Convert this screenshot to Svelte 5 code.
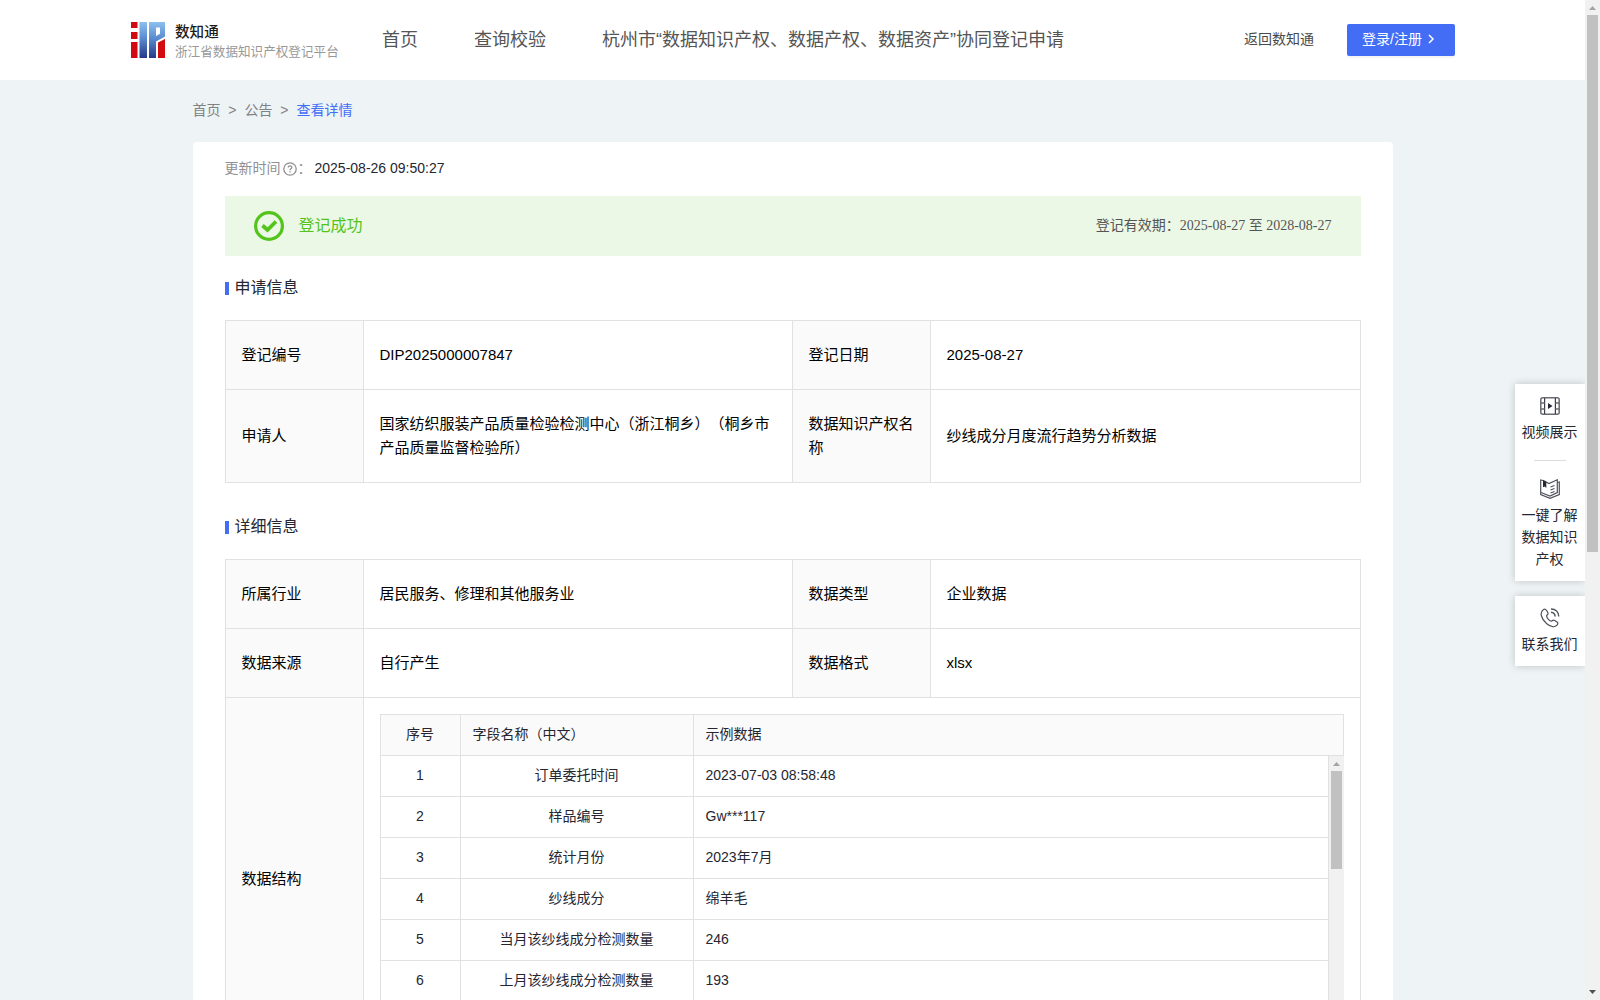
<script>
  const nav = ['首页', '查询校验', '杭州市“数据知识产权、数据产权、数据资产”协同登记申请'];

  const rows = [
    ['1', '订单委托时间', '2023-07-03 08:58:48'],
    ['2', '样品编号', 'Gw***117'],
    ['3', '统计月份', '2023年7月'],
    ['4', '纱线成分', '绵羊毛'],
    ['5', '当月该纱线成分检测数量', '246'],
    ['6', '上月该纱线成分检测数量', '193']
  ];
</script>

<div class="window">
  <div class="page">
    <header>
      <div class="brand">
        <svg class="logo" width="34" height="36" viewBox="0 0 34 36">
          <defs>
            <linearGradient id="blue" x1="0" y1="0" x2="0" y2="36" gradientUnits="userSpaceOnUse">
              <stop offset="0" stop-color="#8cc0ee" />
              <stop offset="0.45" stop-color="#5b8bd0" />
              <stop offset="1" stop-color="#24398a" />
            </linearGradient>
          </defs>
          <rect x="0" y="0" width="6.500" height="6" fill="#d20a11" />
          <rect x="0" y="10" width="6.500" height="7" fill="#d20a11" />
          <rect x="0" y="20" width="6.500" height="16" fill="#d20a11" />
          <rect x="8.500" y="0" width="7.500" height="36" fill="url(#blue)" />
          <path d="M18 0H34V14.500L25 19.500V36H18ZM25 5.500V14L29 11.800V5.500Z" fill="url(#blue)" fill-rule="evenodd" />
          <path d="M27 20.500L34 17V36H27Z" fill="#d20a11" />
        </svg>
        <div class="brand-text">
          <strong>数知通</strong>
          <span>浙江省数据知识产权登记平台</span>
        </div>
      </div>
      <nav>
        {#each nav as item}<a>{item}</a>{/each}
      </nav>
      <a class="back">返回数知通</a>
      <button class="login">
        <span>登录/注册</span>
        <svg width="14" height="14" viewBox="0 0 14 14" fill="none" stroke="#fff" stroke-width="1.5">
          <path d="M5 3L9 7L5 11" />
        </svg>
      </button>
    </header>

    <main>
      <div class="crumbs">
        <span>首页</span><i>&gt;</i><span>公告</span><i>&gt;</i><span class="current">查看详情</span>
      </div>

      <section class="card">
        <div class="updated">
          <span class="muted">更新时间</span>
          <svg width="14" height="14" viewBox="0 0 14 14" fill="none" stroke="#8f9094" stroke-width="1.3">
            <circle cx="7" cy="7" r="6.200" />
            <path d="M5.200 5.600C5.200 3.400 8.800 3.400 8.800 5.500C8.800 6.900 7 6.800 7 8.300M7 9.300V10.500" />
          </svg>
          <span class="muted colon">：</span>
          <span class="time">2025-08-26 09:50:27</span>
        </div>

        <div class="banner">
          <svg width="30" height="30" viewBox="0 0 30 30" fill="none" stroke="#52c41a">
            <circle cx="15" cy="15" r="13.400" stroke-width="3.200" />
            <path d="M8.500 14.500L13.500 19L22 10.500" stroke-width="3.800" />
          </svg>
          <span class="state">登记成功</span>
          <span class="valid">登记有效期：2025-08-27 至 2028-08-27</span>
        </div>

        <h2>申请信息</h2>
        <table class="info">
          <colgroup><col class="label" /><col class="wide" /><col class="label" /><col class="last" /></colgroup>
          <tbody>
            <tr><th>登记编号</th><td>DIP2025000007847</td><th>登记日期</th><td>2025-08-27</td></tr>
            <tr>
              <th>申请人</th>
              <td>国家纺织服装产品质量检验检测中心（浙江桐乡）（桐乡市产品质量监督检验所）</td>
              <th>数据知识产权名称</th>
              <td>纱线成分月度流行趋势分析数据</td>
            </tr>
          </tbody>
        </table>

        <h2>详细信息</h2>
        <table class="info">
          <colgroup><col class="label" /><col class="wide" /><col class="label" /><col class="last" /></colgroup>
          <tbody>
            <tr><th>所属行业</th><td>居民服务、修理和其他服务业</td><th>数据类型</th><td>企业数据</td></tr>
            <tr><th>数据来源</th><td>自行产生</td><th>数据格式</th><td>xlsx</td></tr>
            <tr class="structure">
              <th>数据结构</th>
              <td colspan="3">
                <div class="fields">
                  <div class="row head"><span>序号</span><span>字段名称（中文）</span><span>示例数据</span></div>
                  <div class="body">
                    <div class="list">
                      {#each rows as [no, name, sample]}
                        <div class="row"><span>{no}</span><span>{name}</span><span>{sample}</span></div>
                      {/each}
                    </div>
                    <div class="track">
                      <svg width="15" height="15" viewBox="0 0 15 15"><path d="M4 10L7.500 6L11 10Z" fill="#a3a3a3" /></svg>
                      <div class="thumb"></div>
                    </div>
                  </div>
                </div>
              </td>
            </tr>
          </tbody>
        </table>
      </section>
    </main>
  </div>

  <div class="track main-track">
    <svg width="15" height="15" viewBox="0 0 15 15"><path d="M4 10L7.500 6L11 10Z" fill="#a3a3a3" /></svg>
    <div class="thumb"></div>
    <svg class="down" width="15" height="15" viewBox="0 0 15 15"><path d="M4 5L7.500 9L11 5Z" fill="#505050" /></svg>
  </div>

  <aside>
    <div class="panel">
      <div class="tool">
        <svg width="20" height="18" viewBox="0 0 20 18" fill="none" stroke="#6a6c75" stroke-width="1.500">
          <rect x="0.800" y="0.800" width="18.400" height="16.400" rx="2" />
          <path d="M4.600 1V17M15.400 1V17" stroke="#3a3c46" stroke-width="1.200" />
          <path d="M1 6H4.600M1 12H4.600M15.400 6H19M15.400 12H19" />
          <path d="M8 6V12L12.500 9Z" fill="#252631" stroke="none" />
        </svg>
        <span>视频展示</span>
      </div>
      <hr />
      <div class="tool">
        <svg width="20" height="20" viewBox="0 0 20 20" fill="none" stroke="#50525c" stroke-width="1.200">
          <path d="M3 1.500L0.700 1V15.500L10 19.300L19.300 15.500V3L17.500 3.500" />
          <path d="M3 1.200L9 4.500L17.300 0.800V13.500L10 17L1 13.500M10.500 8L14.500 6.500M10.500 11L14.500 9.500M10.500 14L14.500 12.500" />
          <path d="M3 1.200L6.300 3V9L4.700 7.600L3 8.200Z" fill="#252631" stroke="none" />
        </svg>
        <span>一键了解数据知识产权</span>
      </div>
    </div>
    <div class="panel">
      <div class="tool">
        <svg width="20" height="20" viewBox="0 0 20 20" fill="none" stroke="#50525c" stroke-width="1.200">
          <path d="M3.500 1.500C5 0.600 5.800 1.200 6.600 2.500L7.800 4.500C8.500 5.800 7.800 6.600 6.700 7.500C6.200 9.500 9.500 13.300 11.700 13.200C12.700 12.200 13.600 11.700 14.700 12.400L17 13.900C18.200 14.700 18 15.800 17.200 16.900C15 19.600 11 19.500 6.500 15.500C1 10.500 -0.700 4.500 3.500 1.500Z" />
          <path d="M11 4.300C13.500 4.500 15 6 15.200 8.500M11 1C15.500 1 18.600 4 18.700 8.500" stroke-width="1.500" />
        </svg>
        <span>联系我们</span>
      </div>
    </div>
  </aside>
</div>

<style>
  :global(body) {
    overflow: hidden;
  }
  .window {
    position: relative;
    display: grid;
    grid-template-columns: 1585px 15px;
    width: 1600px;
    height: 1000px;
    overflow: hidden;
    font: 14px/22px 'Liberation Sans', 'Noto Sans CJK SC', sans-serif;
    color: #252631;
    text-spacing-trim: space-all;
  }
  .window * {
    box-sizing: border-box;
  }
  .page {
    height: 1000px;
    overflow: hidden;
    background: #eef3f6;
  }

  header {
    display: flex;
    align-items: center;
    height: 80px;
    padding: 0 130px 0 131px;
    background: #fff;
    white-space: nowrap;
  }
  .brand {
    display: flex;
    align-items: center;
    gap: 10px;
    width: 251px;
  }
  .brand-text {
    display: flex;
    flex-direction: column;
    font-family: 'Noto Sans CJK SC', sans-serif;
  }
  .brand-text strong {
    font-size: 14.6px;
    font-weight: 500;
    line-height: 20px;
    color: #1c1c1c;
  }
  .brand-text span {
    font-size: 12.6px;
    line-height: 19px;
    color: #999;
  }
  nav {
    display: flex;
    gap: 56px;
    padding-bottom: 1px;
    font-size: 18px;
    color: #555;
  }
  .back {
    margin-left: auto;
    padding-bottom: 2px;
    color: #4a4a4a;
  }
  .login {
    display: flex;
    align-items: center;
    gap: 2px;
    width: 108px;
    height: 32px;
    margin-left: 33px;
    padding: 0 15px 2px;
    border: 0;
    border-radius: 2px;
    background: #446df6;
    box-shadow: 0 2px 0 rgba(0, 0, 0, 0.045);
    font: inherit;
    color: #fff;
  }

  main {
    width: 1200px;
    margin: 0 auto;
  }
  .crumbs {
    display: flex;
    height: 62px;
    padding-top: 19px;
    color: #808286;
  }
  .crumbs i {
    margin: 0 8px 0 7.800px;
    font-style: normal;
  }
  .crumbs .current {
    color: #446df6;
  }

  .card {
    height: 1200px;
    padding: 16px 32px 0;
    border-radius: 4px;
    background: #fff;
  }
  .updated {
    display: flex;
    align-items: center;
    height: 22px;
  }
  .updated span {
    padding-bottom: 2px;
  }
  .updated svg {
    margin: 0 1px 0 2px;
  }
  .muted {
    color: #8f9094;
  }
  .colon {
    width: 17px;
  }
  .banner {
    display: flex;
    align-items: center;
    height: 60px;
    margin-top: 16px;
    padding: 0 29px;
    background: #ecf8e6;
  }
  .state {
    margin-left: 15px;
    font-size: 16px;
    color: #52c41a;
  }
  .valid {
    margin-left: auto;
    padding-bottom: 1px;
    font-family: 'Liberation Serif', 'Noto Sans CJK SC', serif;
    color: #555;
  }
  h2 {
    display: flex;
    align-items: center;
    height: 24px;
    margin: 20px 0;
    font-size: 16px;
    font-weight: 400;
  }
  h2::before {
    content: '';
    width: 4px;
    height: 13px;
    margin: 0 6px 0 0;
    background: #446df6;
  }
  .info + h2 {
    margin-top: 32px;
  }

  .info {
    width: 1136px;
    table-layout: fixed;
    border-collapse: collapse;
    font-size: 15px;
    line-height: 24px;
    color: #000;
  }
  .label {
    width: 138px;
  }
  .wide {
    width: 429px;
  }
  .info th,
  .info td {
    padding: 21.500px 15.500px 22.500px 16px;
    border: 1px solid #e1e1e1;
    font-weight: 400;
    text-align: left;
    vertical-align: middle;
  }
  .info th {
    background: #fafafa;
  }
  .info .structure td {
    padding: 16px;
    vertical-align: top;
  }
  .structure {
    height: 363px;
  }

  .fields {
    width: 964px;
    height: 330px;
    overflow: hidden;
    border: 1px solid #e1e1e1;
    border-width: 1px 0 1px 1px;
    font-size: 14px;
    line-height: 22px;
    color: #252631;
  }
  .row {
    display: grid;
    grid-template-columns: 80px 233px 1fr;
    height: 41px;
  }
  .row span {
    padding: 8px 12px 10px;
    border-right: 1px solid #e1e1e1;
    border-bottom: 1px solid #e1e1e1;
    text-align: center;
  }
  .row span:last-child,
  .head span:nth-child(2) {
    text-align: left;
  }
  .head {
    background: #fafafa;
  }
  .body {
    display: grid;
    grid-template-columns: 1fr 15px;
  }
  .track {
    display: flex;
    flex-direction: column;
    align-items: center;
    background: #f1f1f1;
  }
  .track svg {
    display: block;
  }
  .thumb {
    width: 11px;
    height: 98px;
    background: #c1c1c1;
  }
  .main-track .thumb {
    height: 537px;
  }
  .main-track .down {
    margin-top: auto;
  }

  /* Floating shortcuts, pinned beside the page scrollbar */
  aside {
    position: absolute;
    top: 374px;
    right: 15px;
    display: flex;
    flex-direction: column;
    gap: 15px;
    width: 80px;
    padding: 10px 0 10px 10px;
    overflow: hidden;
  }
  .panel {
    padding: 12px 7px 11px 6px;
    background: #fff;
    box-shadow: 0 0 8px rgba(0, 0, 0, 0.2);
  }
  .tool {
    display: flex;
    flex-direction: column;
    align-items: center;
    gap: 5px;
    text-align: center;
  }
  .tool svg {
    height: 20px;
  }
  .panel hr {
    width: 32px;
    height: 1px;
    margin: 17px auto 18px;
    border: 0;
    background: #dcdcdc;
  }
</style>
